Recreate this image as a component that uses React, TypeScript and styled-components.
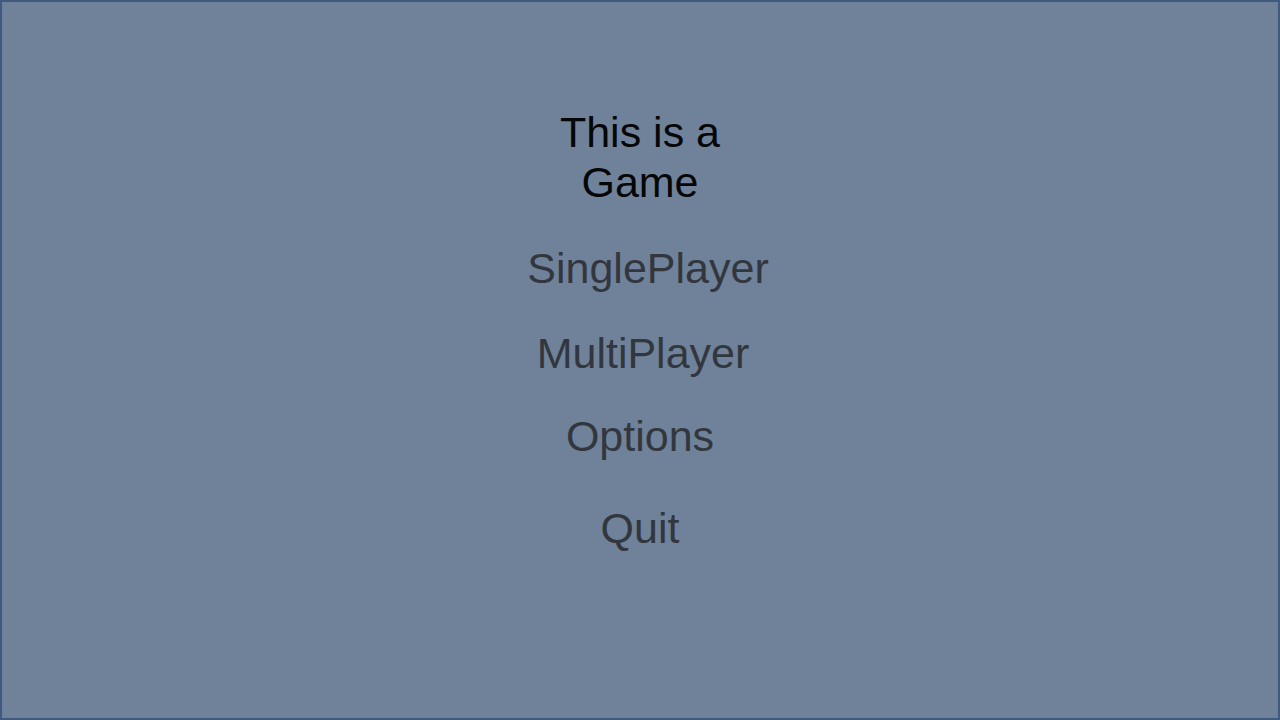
import styled, { createGlobalStyle } from "styled-components";

const GlobalStyle = createGlobalStyle`
    html, body {
        margin: 0;
        padding: 0;
        background: #6f8299;
    }
    * {
        box-sizing: border-box;
    }
`;

const Screen = styled.div`
    width: 1280px;
    height: 720px;
    background-color: #6f8299;
    border: 2px solid #3f5a80;
    display: flex;
    flex-direction: column;
    align-items: center;
    padding-top: 105px;
    font-family: "Liberation Sans", Arial, sans-serif;
    overflow: hidden;
`;

const Title = styled.h1`
    margin: 0;
    width: 200px;
    font-size: 43px;
    font-weight: 400;
    line-height: 50px;
    text-align: center;
    color: #050608;
`;

const MenuButton = styled.button<{ $gap: number; $shift?: number }>`
    margin-top: ${(p) => p.$gap}px;
    padding: 0;
    padding-left: ${(p) => (p.$shift ?? 0) * 2}px;
    background: none;
    border: none;
    font-family: inherit;
    font-size: 43px;
    line-height: 48px;
    color: #32373f;
    cursor: pointer;
`;

const items = [
    { label: "SinglePlayer", gap: 37, shift: 8 },
    { label: "MultiPlayer", gap: 37, shift: 3 },
    { label: "Options", gap: 35, shift: 0 },
    { label: "Quit", gap: 44, shift: 0 },
];

function App() {
    return (
        <>
            <GlobalStyle />
            <Screen>
                <Title>This is a Game</Title>
                {items.map((item) => (
                    <MenuButton key={item.label} $gap={item.gap} $shift={item.shift}>
                        {item.label}
                    </MenuButton>
                ))}
            </Screen>
        </>
    );
}

export default App;
